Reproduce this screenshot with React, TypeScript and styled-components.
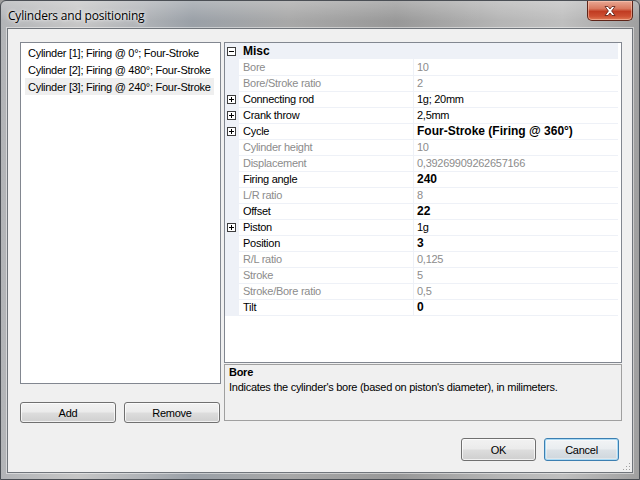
import React from 'react';
import styled, { createGlobalStyle, css } from 'styled-components';

const Global = createGlobalStyle`
  html, body { margin: 0; padding: 0; width: 640px; height: 480px; overflow: hidden; background: #9c9c9c; }
  body { font-family: "Liberation Sans", Arial, sans-serif; font-size: 11px; letter-spacing: -0.27px; color: #000; }
  * { box-sizing: border-box; }
`;

const LINE = '#eef1f7';

const Window = styled.div`
  width: 640px;
  height: 480px;
  display: flex;
  flex-direction: column;
  border: 1px solid #4b4f55;
  border-radius: 6px 6px 0 0;
  padding: 0 6px 6px 6px;
  background:
    linear-gradient(180deg, rgba(255,255,255,0.25) 0px, rgba(255,255,255,0) 20px),
    linear-gradient(90deg, #b2b4b7 0%, #c6c6c6 12%, #b0b3b7 22%, #9aa0a7 30%, #a8a8a8 45%, #989898 62%, #b5b5b5 78%, #bfbfbf 88%, #a0a0a0 100%);
`;

const TitleBar = styled.div`
  height: 27px;
  display: flex;
  align-items: flex-start;
`;

const Title = styled.div`
  font-family: "Segoe UI", "Open Sans", "Noto Sans", sans-serif;
  font-size: 12px;
  letter-spacing: -0.2px;
  color: #000;
  padding: 6px 0 0 1px;
  text-shadow: 0 0 6px rgba(255,255,255,0.9), 0 0 3px rgba(255,255,255,0.9);
`;

const CloseButton = styled.div`
  margin-left: auto;
  width: 46px;
  height: 20px;
  border: 1px solid #5e2418;
  border-top: none;
  border-radius: 0 0 5px 5px;
  background: linear-gradient(180deg, #e9a894 0%, #d9795f 40%, #c13c22 55%, #cd4f32 80%, #e07a55 100%);
  box-shadow: inset 0 0 0 1px rgba(255,210,190,0.5);
  display: flex;
  align-items: center;
  justify-content: center;
`;

const Client = styled.div`
  position: relative;
  flex: 1;
  background: #f0f0f0;
  border: 1px solid #70757b;
  box-shadow: 0 0 0 1px rgba(255,255,255,0.45);
  display: flex;
  flex-direction: column;
  padding: 13px 10px 0 12px;
`;

const Main = styled.div`
  display: grid;
  grid-template-columns: 201px 1fr;
  column-gap: 3px;
`;

const LeftCol = styled.div`
  display: flex;
  flex-direction: column;
`;

const RightCol = styled.div`
  display: flex;
  flex-direction: column;
`;

const ListBox = styled.div`
  height: 342px;
  background: #fff;
  border: 1px solid #828790;
  padding: 1px 6px 0 4px;
`;

const ListItem = styled.div<{ $selected?: boolean }>`
  height: 17px;
  line-height: 18px;
  padding-left: 3px;
  white-space: nowrap;
  ${(p) => p.$selected && css`background: #efefef;`}
`;

const ButtonRow = styled.div`
  margin-top: 18px;
  display: flex;
  gap: 8px;
`;

const Button = styled.div<{ $w: number; $h: number; $default?: boolean }>`
  width: ${(p) => p.$w}px;
  height: ${(p) => p.$h}px;
  border: 1px solid #707070;
  border-radius: 3px;
  background: linear-gradient(180deg, #f2f2f2 0%, #ebebeb 48%, #dddddd 52%, #cfcfcf 100%);
  box-shadow: inset 0 0 0 1px rgba(255,255,255,0.7);
  display: flex;
  align-items: center;
  justify-content: center;
  color: #000;
  ${(p) => p.$default && css`
    border-color: #3c7fb1;
    box-shadow: inset 0 0 0 1px #a9daf5, inset 0 0 0 2px rgba(255,255,255,0.35);
    background: linear-gradient(180deg, #f2f4f6 0%, #e9edf0 48%, #dbe1e6 52%, #ced6dc 100%);
  `}
`;

const PGrid = styled.div`
  height: 321px;
  background: #fff;
  border: 1px solid #828790;
  padding-right: 3px;
`;

const Row = styled.div`
  display: grid;
  grid-template-columns: 14px 175px 1fr;
  height: 16px;
`;

const Margin = styled.div`
  background: ${LINE};
  display: flex;
  align-items: center;
  padding-left: 2px;
`;

const NameCell = styled.div<{ $ro?: boolean }>`
  border-bottom: 1px solid ${LINE};
  border-right: 1px solid ${LINE};
  padding-left: 4px;
  line-height: 16px;
  white-space: nowrap;
  color: ${(p) => (p.$ro ? '#8c8c8c' : '#000')};
`;

const ValueCell = styled.div<{ $ro?: boolean; $bold?: boolean }>`
  border-bottom: 1px solid ${LINE};
  padding-left: 3px;
  line-height: 16px;
  white-space: nowrap;
  color: ${(p) => (p.$ro ? '#8c8c8c' : '#000')};
  ${(p) => p.$bold && css`
    font-weight: bold;
    font-size: 12px;
    letter-spacing: 0;
  `}
`;

const CategoryRow = styled.div`
  display: grid;
  grid-template-columns: 14px 1fr;
  height: 16px;
  background: ${LINE};
`;

const CategoryName = styled.div`
  font-weight: bold;
  font-size: 12px;
  letter-spacing: 0;
  padding-left: 4px;
  line-height: 17px;
`;

const Desc = styled.div`
  margin-top: 1px;
  height: 57px;
  border: 1px solid #a0a0a0;
  background: #f0f0f0;
  padding: 0 4px;
  line-height: 15px;
`;

const DescTitle = styled.div`
  font-weight: bold;
`;

const BottomRow = styled.div`
  margin-top: 15px;
  display: flex;
  justify-content: flex-end;
  gap: 8px;
  padding-right: 3px;
`;

const Grip = styled.svg`
  position: absolute;
  right: 1px;
  bottom: 1px;
`;

const Expander: React.FC<{ open?: boolean }> = ({ open }) => (
  <svg width="9" height="9" viewBox="0 0 9 9">
    <rect x="0.5" y="0.5" width="8" height="8" fill="#fff" stroke="#3c3c3c" />
    <line x1="2" y1="4.5" x2="7" y2="4.5" stroke="#000" />
    {!open && <line x1="4.5" y1="2" x2="4.5" y2="7" stroke="#000" />}
  </svg>
);

type Prop = { name: string; value: string; ro?: boolean; bold?: boolean; expand?: boolean };

const props: Prop[] = [
  { name: 'Bore', value: '10', ro: true },
  { name: 'Bore/Stroke ratio', value: '2', ro: true },
  { name: 'Connecting rod', value: '1g; 20mm', expand: true },
  { name: 'Crank throw', value: '2,5mm', expand: true },
  { name: 'Cycle', value: 'Four-Stroke (Firing @ 360°)', bold: true, expand: true },
  { name: 'Cylinder height', value: '10', ro: true },
  { name: 'Displacement', value: '0,39269909262657166', ro: true },
  { name: 'Firing angle', value: '240', bold: true },
  { name: 'L/R ratio', value: '8', ro: true },
  { name: 'Offset', value: '22', bold: true },
  { name: 'Piston', value: '1g', expand: true },
  { name: 'Position', value: '3', bold: true },
  { name: 'R/L ratio', value: '0,125', ro: true },
  { name: 'Stroke', value: '5', ro: true },
  { name: 'Stroke/Bore ratio', value: '0,5', ro: true },
  { name: 'Tilt', value: '0', bold: true },
];

const cylinders = [
  'Cylinder [1]; Firing @ 0°; Four-Stroke',
  'Cylinder [2]; Firing @ 480°; Four-Stroke',
  'Cylinder [3]; Firing @ 240°; Four-Stroke',
];

export default function App() {
  return (
    <>
      <Global />
      <Window>
        <TitleBar>
          <Title>Cylinders and positioning</Title>
          <CloseButton>
            <svg width="14" height="12" viewBox="0 0 14 12">
              <path d="M2 1.5 L5 1.5 L7 4 L9 1.5 L12 1.5 L8.6 6 L12 10.5 L9 10.5 L7 8 L5 10.5 L2 10.5 L5.4 6 Z" fill="#fff" stroke="#5a1a10" strokeWidth="0.8" strokeLinejoin="round" />
            </svg>
          </CloseButton>
        </TitleBar>
        <Client>
          <Main>
            <LeftCol>
              <ListBox>
                {cylinders.map((c, i) => (
                  <ListItem key={c} $selected={i === 2}>{c}</ListItem>
                ))}
              </ListBox>
              <ButtonRow>
                <Button $w={96} $h={21}>Add</Button>
                <Button $w={96} $h={21}>Remove</Button>
              </ButtonRow>
            </LeftCol>
            <RightCol>
              <PGrid>
                <CategoryRow>
                  <Margin><Expander open /></Margin>
                  <CategoryName>Misc</CategoryName>
                </CategoryRow>
                {props.map((p) => (
                  <Row key={p.name}>
                    <Margin>{p.expand && <Expander />}</Margin>
                    <NameCell $ro={p.ro}>{p.name}</NameCell>
                    <ValueCell $ro={p.ro} $bold={p.bold}>{p.value}</ValueCell>
                  </Row>
                ))}
              </PGrid>
              <Desc>
                <DescTitle>Bore</DescTitle>
                <div>Indicates the cylinder's bore (based on piston's diameter), in milimeters.</div>
              </Desc>
            </RightCol>
          </Main>
          <BottomRow>
            <Button $w={75} $h={23}>OK</Button>
            <Button $w={75} $h={23} $default>Cancel</Button>
          </BottomRow>
          <Grip width="10" height="10" viewBox="0 0 10 10">
            {[[8, 2], [8, 5], [8, 8], [5, 5], [5, 8], [2, 8]].map(([x, y]) => (
              <rect key={`${x}-${y}`} x={x} y={y} width="1" height="1" fill="#a0a0a0" />
            ))}
          </Grip>
        </Client>
      </Window>
    </>
  );
}
